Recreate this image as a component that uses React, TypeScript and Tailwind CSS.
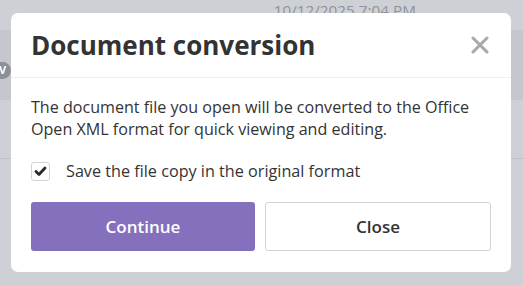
import React from "react";

export default function App() {
  return (
    <div className="relative w-[523px] h-[285px] overflow-hidden bg-[#cdd0d4] font-['Open_Sans',sans-serif]">
      {/* background page */}
      <div className="flex flex-col">
        <div className="h-[30px] flex justify-end pr-[107px]">
          <span className="text-[15.3px] leading-[22px] text-[#8f949a] mt-[-1px]">10/12/2025 7:04 PM</span>
        </div>
        <div className="h-[70px] bg-[#c4c7cb] flex items-center">
          <div className="ml-[-6px] mt-[10px] w-[17px] h-[17px] rounded-full bg-[#8b9096] flex items-center justify-center text-white text-[11px] font-bold">
            V
          </div>
        </div>
        <div className="h-[59px] border-b border-[#bdc1c5]" />
      </div>

      {/* dialog */}
      <div className="absolute left-[11px] top-[13px] w-[500px] bg-white rounded-[7px] flex flex-col">
        <div className="h-[65px] flex items-center justify-between pl-[20px] pr-[21px] border-b border-[#eceef1]">
          <h1 className="text-[26px] leading-[32px] font-bold text-[#333333]">Document conversion</h1>
          <svg width="18" height="18" viewBox="0 0 18 18" className="mr-[1px]">
            <path d="M2 2 L16 16 M16 2 L2 16" stroke="#a3a9ae" strokeWidth="3" strokeLinecap="round" />
          </svg>
        </div>
        <div className="flex flex-col px-[20px] pt-[18px] pb-[21px]">
          <p className="text-[16.1px] leading-[22px] text-[#333333]">
            The document file you open will be converted to the Office Open XML format for quick viewing and editing.
          </p>
          <div className="mt-[20px] flex items-center gap-[16px] h-[22px]">
            <div className="w-[19px] h-[19px] rounded-[3px] border border-[#d0d5da] flex items-center justify-center">
              <svg width="13" height="13" viewBox="0 0 13 13">
                <path d="M2 6.5 L5 9.5 L11 3" stroke="#2a2a2a" strokeWidth="2.8" fill="none" strokeLinecap="round" strokeLinejoin="round" />
              </svg>
            </div>
            <span className="text-[16.2px] leading-[22px] text-[#333333]">Save the file copy in the original format</span>
          </div>
          <div className="mt-[20px] flex gap-[10px]">
            <button className="flex-1 h-[49px] rounded-[3px] bg-[#8570bd] text-white text-[17px] font-semibold">
              Continue
            </button>
            <button className="flex-1 h-[49px] rounded-[3px] bg-white border border-[#d0d5da] text-[#333333] text-[17px] font-semibold">
              Close
            </button>
          </div>
        </div>
      </div>
    </div>
  );
}
